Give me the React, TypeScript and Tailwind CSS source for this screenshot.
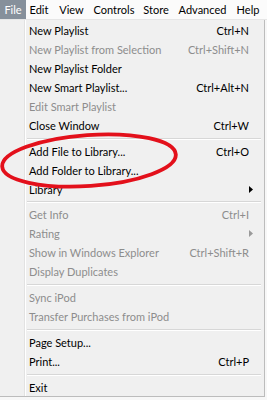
import React from "react";

type Item =
  | { type: "sep"; h: string }
  | { type: "item"; label: string; shortcut?: string; disabled?: boolean; sub?: boolean };

const items: Item[] = [
  { type: "item", label: "New Playlist", shortcut: "Ctrl+N" },
  { type: "item", label: "New Playlist from Selection", shortcut: "Ctrl+Shift+N", disabled: true },
  { type: "item", label: "New Playlist Folder" },
  { type: "item", label: "New Smart Playlist...", shortcut: "Ctrl+Alt+N" },
  { type: "item", label: "Edit Smart Playlist", disabled: true },
  { type: "item", label: "Close Window", shortcut: "Ctrl+W" },
  { type: "sep", h: "h-[7px]" },
  { type: "item", label: "Add File to Library...", shortcut: "Ctrl+O" },
  { type: "item", label: "Add Folder to Library..." },
  { type: "item", label: "Library", sub: true },
  { type: "sep", h: "h-[6px]" },
  { type: "item", label: "Get Info", shortcut: "Ctrl+I", disabled: true },
  { type: "item", label: "Rating", disabled: true, sub: true },
  { type: "item", label: "Show in Windows Explorer", shortcut: "Ctrl+Shift+R", disabled: true },
  { type: "item", label: "Display Duplicates", disabled: true },
  { type: "sep", h: "h-[7px]" },
  { type: "item", label: "Sync iPod", disabled: true },
  { type: "item", label: "Transfer Purchases from iPod", disabled: true },
  { type: "sep", h: "h-[7px]" },
  { type: "item", label: "Page Setup..." },
  { type: "item", label: "Print...", shortcut: "Ctrl+P" },
  { type: "sep", h: "h-[7px]" },
  { type: "item", label: "Exit" },
];

const bar: { label: string; w: string }[] = [
  { label: "File", w: "w-[26px]" },
  { label: "Edit", w: "w-[26px]" },
  { label: "View", w: "w-[39px]" },
  { label: "Controls", w: "w-[46px]" },
  { label: "Store", w: "w-[38px]" },
  { label: "Advanced", w: "w-[55px]" },
  { label: "Help", w: "w-[36px]" },
];

export default function App() {
  return (
    <div
      className="relative w-[267px] h-[400px] overflow-hidden bg-[#f7f7f7] text-[11px] leading-none"
      style={{ fontFamily: 'Lato, "Noto Sans", sans-serif' }}
    >
      <div className="flex h-[20px] items-stretch bg-[#fbfbfb] border-b border-[#e6e6e6]">
        {bar.map((b, i) => (
          <div
            key={b.label}
            className={`${b.w} shrink-0 flex items-center justify-center ${
              i === 0 ? "bg-[#86909b] text-white" : "text-black"
            }`}
          >
            {b.label}
          </div>
        ))}
      </div>
      <div className="relative w-[265px] h-[377px] bg-[#f0f0f0] border-r border-b border-[#bcbcbc] pt-[1px]">
        <div className="absolute left-[24px] top-0 bottom-0 w-[2px] border-l border-[#e2e2e2] bg-white" />
        <div className="relative flex flex-col">
          {items.map((it, i) =>
            it.type === "sep" ? (
              <div key={i} className={`${it.h} flex items-center pl-[27px] pr-[3px]`}>
                <div className="w-full h-[2px] border-t border-[#d7d7d7] bg-white" />
              </div>
            ) : (
              <div
                key={i}
                className={`flex h-[19px] items-center pl-[29px] pr-[15px] ${
                  it.disabled ? "text-[#8d8d8d]" : "text-black"
                }`}
              >
                <span className="flex-1">{it.label}</span>
                {it.shortcut && <span>{it.shortcut}</span>}
                {it.sub && (
                  <svg width="4" height="7" viewBox="0 0 4 7" className="mr-[-4px]">
                    <path d="M0 0 L4 3.5 L0 7 Z" fill={it.disabled ? "#9a9a9a" : "#000"} />
                  </svg>
                )}
              </div>
            )
          )}
        </div>
      </div>
      <svg
        className="absolute left-0 top-0 pointer-events-none"
        width="267"
        height="400"
        viewBox="0 0 267 400"
      >
        <ellipse
          cx="89"
          cy="160.5"
          rx="87"
          ry="25.5"
          transform="rotate(-4 89 160.5)"
          fill="none"
          stroke="#e3101b"
          strokeWidth="3.8"
        />
      </svg>
    </div>
  );
}
